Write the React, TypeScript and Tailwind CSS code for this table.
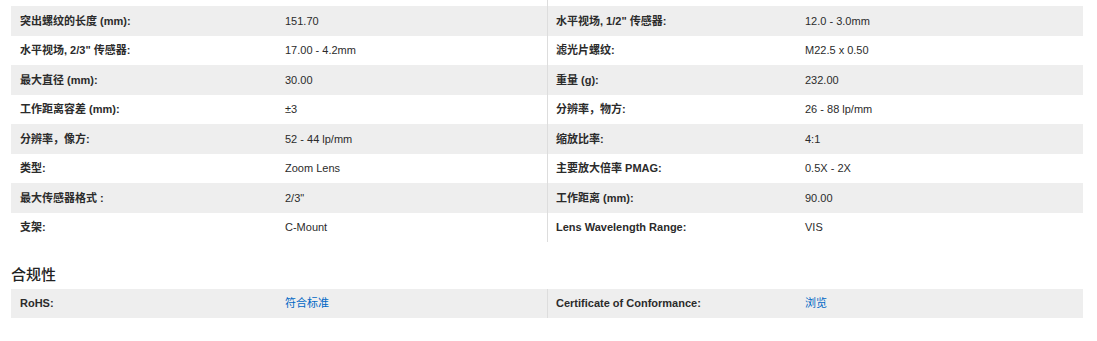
import React from "react"

type Spec = { label: string; value: string }

const leftSpecs: Spec[] = [
  { label: "突出螺纹的长度 (mm):", value: "151.70" },
  { label: "水平视场, 2/3\" 传感器:", value: "17.00 - 4.2mm" },
  { label: "最大直径 (mm):", value: "30.00" },
  { label: "工作距离容差 (mm):", value: "±3" },
  { label: "分辨率，像方:", value: "52 - 44 lp/mm" },
  { label: "类型:", value: "Zoom Lens" },
  { label: "最大传感器格式 :", value: "2/3\"" },
  { label: "支架:", value: "C-Mount" },
]

const rightSpecs: Spec[] = [
  { label: "水平视场, 1/2\" 传感器:", value: "12.0 - 3.0mm" },
  { label: "滤光片螺纹:", value: "M22.5 x 0.50" },
  { label: "重量 (g):", value: "232.00" },
  { label: "分辨率，物方:", value: "26 - 88 lp/mm" },
  { label: "缩放比率:", value: "4:1" },
  { label: "主要放大倍率 PMAG:", value: "0.5X - 2X" },
  { label: "工作距离 (mm):", value: "90.00" },
  { label: "Lens Wavelength Range:", value: "VIS" },
]

const font = "font-['Liberation_Sans','Noto_Sans_CJK_SC',sans-serif]"

function Row({ spec, index, side }: { spec: Spec; index: number; side: "left" | "right" }) {
  const bg = index % 2 === 0 ? "bg-[#eeeeee]" : "bg-white"
  return (
    <div className={`flex h-[29.5px] items-center ${bg}`}>
      <div
        className={
          side === "left"
            ? "w-[274px] shrink-0 pl-[9px] text-[11px] font-bold text-[#2b2b2b]"
            : "w-[257px] shrink-0 pl-[8px] text-[11px] font-bold text-[#2b2b2b]"
        }
      >
        {spec.label}
      </div>
      <div className="text-[11px] text-[#2b2b2b]">{spec.value}</div>
    </div>
  )
}

export default function App(): JSX.Element {
  return (
    <div className={`w-[1097px] h-[341px] bg-white ${font}`}>
      <div className="ml-[11px] flex w-[1072px]">
        <div className="w-[536px] pt-[6px]">
          {leftSpecs.map((s, i) => (
            <Row key={s.label} spec={s} index={i} side="left" />
          ))}
        </div>
        <div className="w-[536px] border-l border-[#dddddd] pt-[6px]">
          {rightSpecs.map((s, i) => (
            <Row key={s.label} spec={s} index={i} side="right" />
          ))}
        </div>
      </div>

      <h3 className="ml-[11px] mt-[22px] h-[25px] text-[15px] font-medium leading-[20px] text-[#222] font-['Noto_Sans_CJK_SC',sans-serif]">
        合规性
      </h3>

      <div className="ml-[11px] flex w-[1072px] bg-[#eeeeee]">
        <div className="flex h-[29px] w-[536px] items-center">
          <div className="w-[274px] shrink-0 pl-[9px] text-[11px] font-bold text-[#2b2b2b]">RoHS:</div>
          <a className="text-[11px] text-[#0067c5]">符合标准</a>
        </div>
        <div className="flex h-[29px] w-[536px] items-center border-l border-[#dddddd]">
          <div className="w-[257px] shrink-0 pl-[8px] text-[11px] font-bold text-[#2b2b2b]">
            Certificate of Conformance:
          </div>
          <a className="text-[11px] text-[#0067c5]">浏览</a>
        </div>
      </div>
    </div>
  )
}
